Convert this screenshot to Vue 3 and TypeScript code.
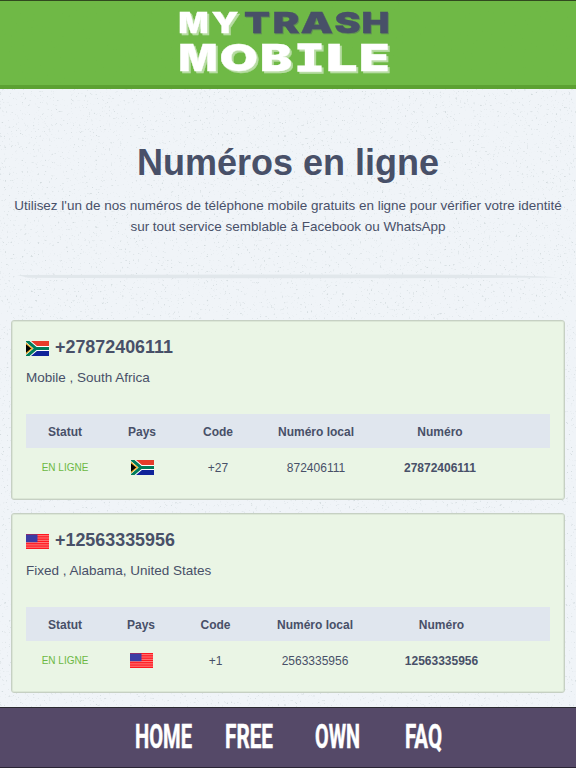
<script setup lang="ts">
interface Glyph { c: string; x: number; w: number }
interface Word { cls: string; y: number; size: number; letters: Glyph[] }
interface Entry {
  flag: 'za' | 'us'
  number: string
  place: string
  code: string
  local: string
  cols: number[]
}

const glyphs = (s: string, spans: number[][]): Glyph[] =>
  [...s].map((c, i) => ({ c, x: spans[i][0], w: spans[i][1] - spans[i][0] }))

const logo: Word[] = [
  { cls: 'white small', y: 33.4, size: 28.5, letters: glyphs('MY', [[178.5, 208.5], [211.5, 238.5]]) },
  { cls: 'slate small', y: 33.4, size: 28.5, letters: glyphs('TRASH', [[244, 270], [272.5, 299.5], [300.5, 333], [334.5, 360.5], [361.5, 389.5]]) },
  { cls: 'white big', y: 70.7, size: 36.5, letters: glyphs('MOBILE', [[178.5, 217.5], [219.5, 258], [260, 292], [294, 325], [326, 357.5], [359, 389.5]]) },
]

const entries: Entry[] = [
  { flag: 'za', number: '27872406111', place: 'Mobile , South Africa', code: '+27', local: '872406111', cols: [78, 76, 76, 120, 128, 46] },
  { flag: 'us', number: '12563335956', place: 'Fixed , Alabama, United States', code: '+1', local: '2563335956', cols: [78, 74, 75, 124, 129, 44] },
]

const nav = [
  { label: 'HOME', w: 57 },
  { label: 'FREE', w: 48 },
  { label: 'OWN', w: 45 },
  { label: 'FAQ', w: 37 },
]
</script>

<template>
  <div class="page">
    <svg class="defs" width="0" height="0" aria-hidden="true">
      <defs>
        <filter id="speckle" x="0" y="0" width="100%" height="100%" color-interpolation-filters="sRGB">
          <feTurbulence type="fractalNoise" baseFrequency="0.45" numOctaves="3" seed="8" />
          <feColorMatrix values="0 0 0 0 0.5  0 0 0 0 0.58  0 0 0 0 0.58  5 0 0 0 -3.3" />
        </filter>
        <symbol id="za" viewBox="0 0 23 15">
          <path fill="#e63c2b" d="M0 0h23v5H0z" />
          <path fill="#10239a" d="M0 10h23v5H0z" />
          <path fill="none" stroke="#fff" stroke-width="5" d="M0-1 10 7.5 0 16M10 7.5h13" />
          <path fill="none" stroke="#007c59" stroke-width="3" d="M0-1 10 7.5 0 16M9 7.5h14" />
          <path fill="#000" stroke="#f5b52e" stroke-width="1.2" d="M-1 1.8 6.2 7.5-1 13.2z" />
        </symbol>
        <symbol id="us" viewBox="0 0 23 15">
          <path fill="#ff1720" d="M0 0h23v15H0z" />
          <path stroke="#ffa09a" stroke-width=".8" d="M0 1.7h23M0 4h23M0 6.3h23M0 8.6h23M0 10.9h23M0 13.2h23" />
          <path fill="#3c3ca4" d="M0 .4h11.5v7.8H0z" />
        </symbol>
      </defs>
    </svg>
    <svg class="grain" width="576" height="768" aria-hidden="true"><rect width="576" height="768" filter="url(#speckle)" /></svg>

    <header class="top">
      <svg class="logo" width="576" height="84" viewBox="0 0 576 84">
        <text v-for="word in logo" :key="word.letters[0].x" :class="word.cls" :y="word.y" :font-size="word.size"><tspan
          v-for="g in word.letters" :key="g.x" :x="g.x" :textLength="g.w" lengthAdjust="spacingAndGlyphs" :class="{ slab: g.c === 'I' }">{{ g.c }}</tspan></text>
      </svg>
    </header>

    <main>
      <h1>Numéros en ligne</h1>
      <p class="intro">Utilisez l'un de nos numéros de téléphone mobile gratuits en ligne pour vérifier votre identité<br />sur tout service semblable à Facebook ou WhatsApp</p>
      <svg class="rule" width="544" height="5" viewBox="0 0 544 5"><path fill="#e1e7eb" d="M1 1Q180 .5 400 .6Q500 .7 542 3.2Q500 4.2 300 4.2Q100 4.2 12 3.8Z" /></svg>

      <section v-for="e in entries" :key="e.number" class="card">
        <h2><svg class="flag" width="23" height="15"><use :href="'#' + e.flag" /></svg><span>+{{ e.number }}</span></h2>
        <p class="place">{{ e.place }}</p>
        <table>
          <colgroup><col v-for="(w, i) in e.cols" :key="i" :style="{ width: w + 'px' }" /></colgroup>
          <thead>
            <tr><th>Statut</th><th>Pays</th><th>Code</th><th>Numéro local</th><th>Numéro</th><th></th></tr>
          </thead>
          <tbody>
            <tr>
              <td class="status">EN LIGNE</td>
              <td><svg class="flag" width="23" height="15"><use :href="'#' + e.flag" /></svg></td>
              <td>{{ e.code }}</td>
              <td>{{ e.local }}</td>
              <td><b>{{ e.number }}</b></td>
              <td></td>
            </tr>
          </tbody>
        </table>
      </section>
    </main>

    <nav class="bottom">
      <a v-for="n in nav" :key="n.label">
        <svg width="62" height="48" viewBox="0 0 62 48"><text x="0" y="35.5" :textLength="n.w" lengthAdjust="spacingAndGlyphs">{{ n.label }}</text></svg>
      </a>
    </nav>
  </div>
</template>

<style>
body { margin: 0; background: #f0f4f8; }
</style>

<style scoped>
.page {
  position: relative;
  display: flex;
  flex-direction: column;
  width: 576px;
  height: 768px;
  box-sizing: border-box;
  overflow: hidden;
  background: #f0f4f8;
  color: #485068;
  font-family: "Liberation Sans", Arial, sans-serif;
}
.defs { position: absolute; }
.grain { position: absolute; inset: 0; opacity: .25; }
.top {
  flex: none;
  height: 89px;
  box-sizing: border-box;
  border-top: 1px solid #31491f;
  border-bottom: 4px solid #5ca132;
  background: rgba(106, 183, 64, .97);
  position: relative;
}
.logo { display: block; margin-top: -1px; }
.logo text {
  font-family: Inter, sans-serif;
  font-weight: 900;
  stroke-width: .3;
  filter: drop-shadow(2px 2px 0 rgba(255, 255, 255, .5));
}
.logo .white { fill: #fff; stroke: #fff; }
.logo .slate { fill: #485068; stroke: #485068; filter: drop-shadow(1.6px 1.6px 0 rgba(72, 80, 104, .4)); }
.logo .slab { font-family: "DejaVu Sans Mono", monospace; font-weight: 700; stroke-width: 1.3; }
main { flex: 1; min-height: 0; position: relative; padding: 0 11px; }
h1 { margin: 52px 0 0; text-align: center; font-size: 36px; line-height: 44px; font-weight: 700; }
.intro { margin: 10px -11px 0; text-align: center; font-size: 13.48px; line-height: 21px; white-space: nowrap; }
.rule { display: block; margin: 37px auto 41px; }
.card {
  height: 180px;
  margin: 0 0 13px;
  padding: 15px 14px 0;
  box-sizing: border-box;
  border: 1px solid #c6d0c3;
  border-radius: 3px;
  box-shadow: inset 0 0 0 1px #dce7d7;
  background: #eaf5e5;
}
h2 { display: flex; align-items: center; gap: 6px; margin: 0; font-size: 17.9px; line-height: 22px; }
h2 .flag { position: relative; top: 1px; }
.flag { display: inline-block; vertical-align: middle; flex: none; }
.place { margin: 10px 0 0; font-size: 13.5px; line-height: 20px; }
table { width: 524px; margin-top: 26px; table-layout: fixed; border-collapse: collapse; text-align: center; font-size: 12px; }
th, td { padding: 0; }
th { height: 33px; padding-top: 1px; background: #e0e6ee; }
td { height: 39px; }
.status { color: #6cb843; font-size: 10px; padding-bottom: 1px; }
td .flag { margin-top: -2px; }
.bottom {
  position: relative;
  flex: none;
  display: flex;
  height: 61px;
  box-sizing: border-box;
  padding: 4px 0 0 135px;
  border-top: 1px solid #2a2930;
  border-bottom: 1px solid #2b2536;
  background: #554968;
}
.bottom a { width: 90px; color: #fff; }
.bottom svg { overflow: visible; }
.bottom text { font: 700 32.5px Roboto, sans-serif; fill: #fff; stroke: #fff; stroke-width: .5; }
</style>
